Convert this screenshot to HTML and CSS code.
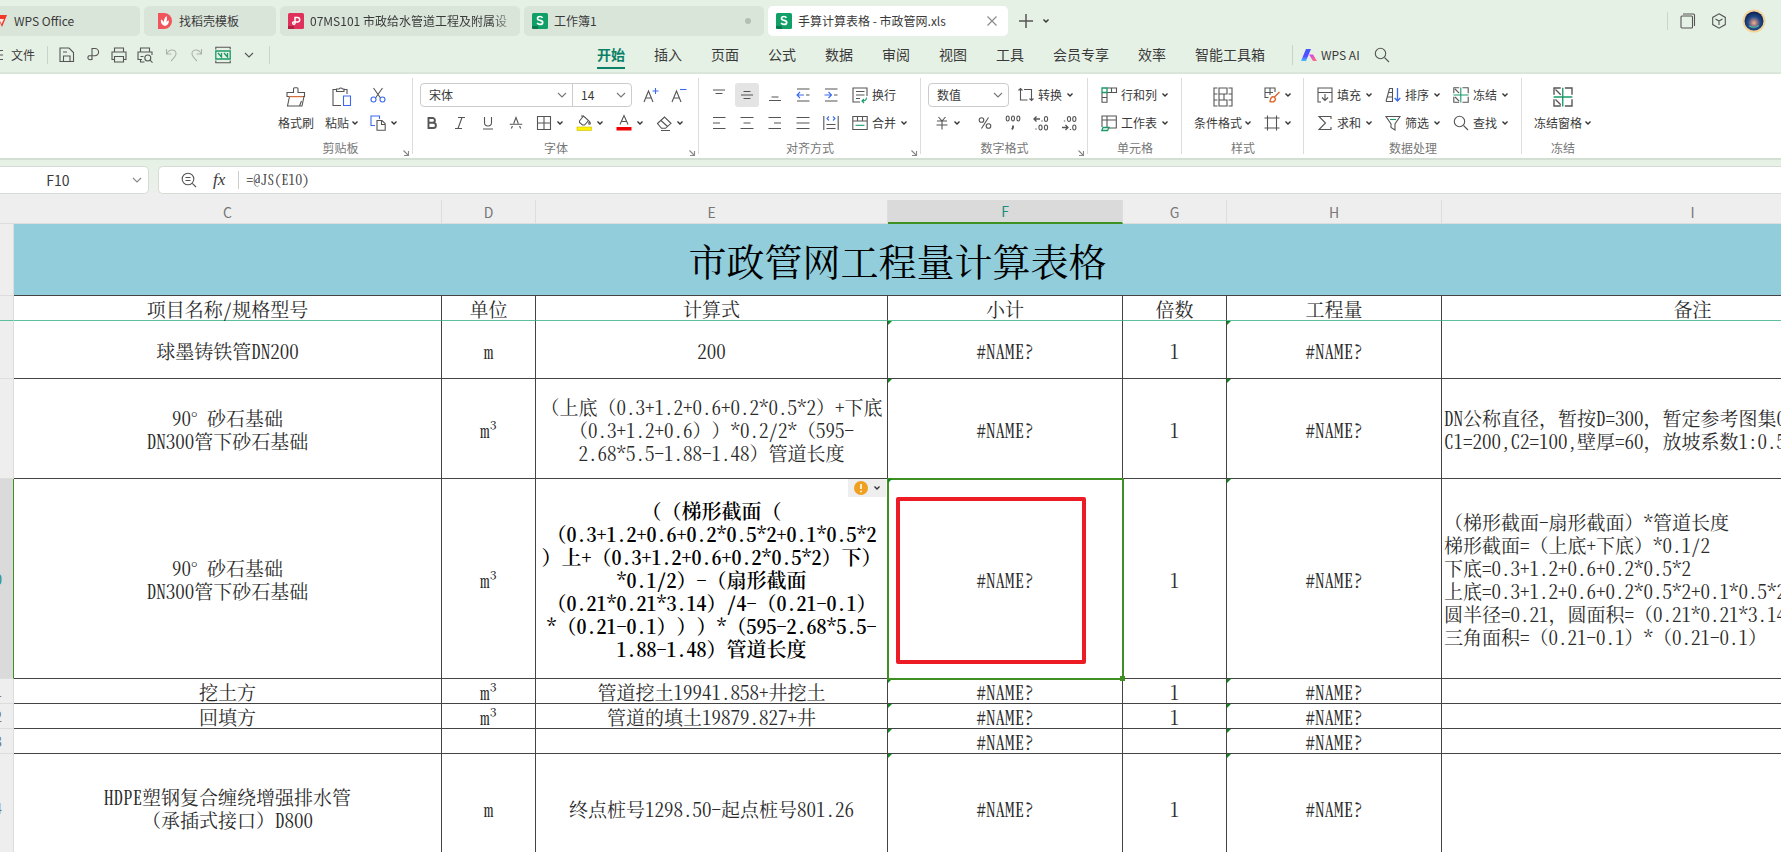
FILE: index.html
```html
<!DOCTYPE html>
<html lang="zh-CN">
<head>
<meta charset="utf-8">
<title>手算计算表格 - 市政管网.xls</title>
<link rel="stylesheet" href="styles.css">
</head>
<body>
<svg class="defs" aria-hidden="true">
  <defs>
    <linearGradient id="ai1" x1="0" y1="0" x2="0" y2="1"><stop offset="0" stop-color="#3d5afe"/><stop offset=".6" stop-color="#5b4bff"/><stop offset="1" stop-color="#3ec5ff"/></linearGradient>
    <linearGradient id="ai2" x1="0" y1="0" x2="1" y2="1"><stop offset="0" stop-color="#d63bff"/><stop offset="1" stop-color="#ff7a6b"/></linearGradient>
    <radialGradient id="av" cx=".5" cy=".6" r=".6"><stop offset="0" stop-color="#f2b58a"/><stop offset=".3" stop-color="#8d6f86"/><stop offset=".55" stop-color="#1c4a86"/><stop offset="1" stop-color="#0c1c50"/></radialGradient>
  </defs>
  <symbol id="chev" viewBox="0 0 8 8"><path d="M1.5 2.5 4 5l2.5-2.5"/></symbol>
  <symbol id="chevl" viewBox="0 0 10 10"><path d="M1 3l4 4 4-4"/></symbol>
  <symbol id="launch" viewBox="0 0 8 8"><path d="M1.500 1.500 6 6M6.500 2v4.500H2"/></symbol>
  <symbol id="sheet" viewBox="0 0 16 16"><rect width="16" height="16" rx="1.500" fill="#109f67" stroke="none"/><path d="M0 13h6v3H1.500A1.500 1.500 0 0 1 0 14.500z" fill="#0a7a4e" stroke="none"/><path d="M10.500 4.800C10 3.900 9.200 3.500 8 3.500c-1.500 0-2.500.7-2.500 1.900 0 2.800 5.200 1.200 5.200 4 0 1.200-1.100 2-2.700 2-1.300 0-2.300-.5-2.800-1.500" stroke="#fff" stroke-width="1.700"/></symbol>
  <symbol id="search" viewBox="0 0 16 16"><circle cx="6.500" cy="6.500" r="5.200"/><path d="M10.500 10.500 15 15"/></symbol>
  <symbol id="freeze" viewBox="0 0 16 16"><path d="M.8 6.200V.8h5.400M9.500 .8h5.700v5.400M.8 9.800v5.400h5.400M9.500 15.200h5.700V9.800M2 2l4.200 4.200M2 10l4.200 4.200"/><path d="M7.800 .5v15M.5 8h15" stroke="#1b9a68"/></symbol>
</svg>

<header class="tabs">
  <nav class="tablist" aria-label="文档标签">
    <button class="tab tab-home"><svg class="i16" viewBox="0 0 16 16"><path d="M0 2h15l-5 12L6 5H0" stroke="none" fill="#f0392b"/><path d="M7 6h5l-2.500 5z" fill="#ffe9e2" stroke="none"/></svg><span>WPS Office</span></button>
    <button class="tab tab-tpl"><svg class="i16" viewBox="0 0 16 16"><path d="M1 0h6a8 8 0 0 1 0 16H1z" fill="#f2545b" stroke="none"/><path d="M8 13C4.500 12 3.500 9.500 4 6.500c1.500.5 2.500 1.500 3 3C6.800 7 7.500 4.500 9.500 3c.8 2 .7 4.300-.5 6.200.8-1 1.800-1.500 3-1.700C12 10.500 10.500 12.500 8 13z" fill="#fff" stroke="none"/></svg><span>找稻壳模板</span></button>
    <button class="tab tab-doc"><svg class="i16" viewBox="0 0 16 16"><rect width="16" height="16" rx="1.500" fill="#e0305c" stroke="none"/><path d="M0 13h6v3H0z" fill="#b31e43" stroke="none"/><path d="M7 11V4.500h2.500a2.200 2.200 0 0 1 0 4.400H5.500a1.300 1.300 0 1 0 1.500 2" stroke="#fff" stroke-width="1.500"/></svg><span class="fade">07MS101 市政给水管道工程及附属设</span></button>
    <button class="tab tab-doc"><svg class="i16"><use href="#sheet"/></svg><span>工作簿1</span><i class="dot"></i></button>
    <button class="tab tab-doc active"><svg class="i16"><use href="#sheet"/></svg><span>手算计算表格 - 市政管网.xls</span><svg class="i10 close" viewBox="0 0 10 10"><path d="M.5 .5l9 9M9.500 .5l-9 9"/></svg></button>
  </nav>
  <button class="plain plus" aria-label="新建"><svg class="i14" viewBox="0 0 14 14"><path d="M7 0v14M0 7h14" stroke-width="1.500"/></svg></button>
  <button class="plain" aria-label="标签列表"><svg class="i8 dark"><use href="#chev"/></svg></button>
  <div class="corner">
    <button class="plain" aria-label="窗口"><svg class="i16" viewBox="0 0 16 16"><rect x="1" y="3" width="11.500" height="12" rx="1"/><path d="M3 1h10.500a1 1 0 0 1 1 1v11"/></svg></button>
    <button class="plain" aria-label="应用"><svg class="i16" viewBox="0 0 16 16"><path d="M8 .8 14.300 4.400v7.200L8 15.200 1.700 11.600V4.400zM4.500 6 8 8l3.500-2M8 8v4"/></svg></button>
    <button class="plain" aria-label="账号"><svg class="i24" viewBox="0 0 24 24"><circle cx="12" cy="12" r="11.500" fill="#f3d49a" stroke="none"/><circle cx="12" cy="12" r="9.500" fill="url(#av)" stroke="none"/><path d="M7 17c3 1.500 7 1.500 10-.5" stroke="#3fb9a5"/></svg></button>
  </div>
</header>

<nav class="menu" aria-label="菜单">
  <div class="quick">
    <button class="plain file"><svg class="burger" viewBox="0 0 4 12"><path d="M0 1.500h3M0 6h3M0 10.500h3"/></svg>文件</button>
    <button class="plain q" aria-label="保存"><svg class="i16" viewBox="0 0 16 16"><path d="M1 1h9l4.500 4.500v9H1zM4.500 14.500V9h6.500v5.500M4 5h4"/></svg></button>
    <button class="plain q" aria-label="输出为PDF"><svg class="i16" viewBox="0 0 16 16"><path d="M7 13V1.500h3a3.600 3.600 0 0 1 0 7.200H4a2.200 2.200 0 1 0 3 3"/></svg></button>
    <button class="plain q" aria-label="打印"><svg class="i16" viewBox="0 0 16 16"><path d="M3.500 5V1h9v4M3.500 12.500H1V5h14v7.500h-2.500M3.500 9.500h9V15h-9z"/></svg></button>
    <button class="plain q" aria-label="打印预览"><svg class="i16" viewBox="0 0 16 16"><path d="M3.500 5V1h9v4M5 12.500H1V5h14v3M3.500 12v3h4M3.500 9.500h3"/><circle cx="10.800" cy="11" r="3"/><path d="M13 13.200l2.500 2.500"/></svg></button>
    <button class="plain q dim" aria-label="撤销"><svg class="i14" viewBox="0 0 14 14"><path d="M2.500 1v5h5M2.500 6C4 3.500 5.500 2 8 2c2.500 0 4 1.500 4 3.700 0 2.300-2 4.300-5 7.300"/></svg></button>
    <button class="plain q dim" aria-label="恢复"><svg class="i14" viewBox="0 0 14 14"><path d="M11.500 1v5h-5M11.500 6C10 3.500 8.500 2 6 2 3.500 2 2 3.500 2 5.700c0 2.300 2 4.300 5 7.300"/></svg></button>
    <button class="plain q" aria-label="护眼"><svg class="i16" viewBox="0 0 16 16"><path d="M.8 2.500V.3h14.400v2.200M.8 13.500v2.200h14.400v-2.200"/><path d="M.8 4h14.400v8H.8zM3 6l3.500 4V6M9 6l3.500 4V6" stroke="#1b9a68" stroke-width="1.300"/></svg></button>
    <button class="plain q" aria-label="更多"><svg class="i10"><use href="#chevl"/></svg></button>
    <i class="vbar"></i>
  </div>
  <div class="menus">
    <button class="m on">开始</button><button class="m">插入</button><button class="m">页面</button><button class="m">公式</button><button class="m">数据</button><button class="m">审阅</button><button class="m">视图</button><button class="m">工具</button><button class="m">会员专享</button><button class="m">效率</button><button class="m">智能工具箱</button>
  </div>
  <div class="ai">
    <button class="plain wpsai"><svg class="i16" viewBox="0 0 16 16"><path d="M0 14 5 2h5L5 14z" fill="url(#ai1)" stroke="none"/><path d="M8 7.500h4l4 6.500h-4z" fill="url(#ai2)" stroke="none"/></svg><span>WPS AI</span></button>
    <button class="plain" aria-label="搜索"><svg class="i16"><use href="#search"/></svg></button>
  </div>
</nav>

<section class="ribbon" aria-label="开始">
  <div class="group g-clip">
    <div class="body cols">
      <button class="big w56"><svg class="i22" viewBox="0 0 20 20"><path d="M3.500 9.500 1.500 19H16l2-9.500M1 5.500h6.500V1.800a1 1 0 0 1 1-1H11a1 1 0 0 1 1 1v3.700h6.500v4H1zM13.500 19l2-5"/><path d="M3 9.700h14" stroke="#e8743b"/></svg><span>格式刷</span></button>
      <button class="big w36"><svg class="i22" viewBox="0 0 20 20"><path d="M9 18.500H1V2.500h3M12.500 2.500H15V7M4.500 4.500V2H7a2 2 0 0 1 3.500 0H12v2.500z"/><path d="M11.500 9h7v9.500h-7z" stroke="#3b6af0"/></svg><span>粘贴<svg class="i8 dark"><use href="#chev"/></svg></span></button>
      <div class="rows pad10">
        <button class="b" aria-label="剪切"><svg class="i16" viewBox="0 0 16 16"><path d="M3.500 1l7 10M12.500 1l-7 10"/><circle cx="3.500" cy="12.500" r="2.500" stroke="#3b6af0"/><circle cx="12.500" cy="12.500" r="2.500" stroke="#3b6af0"/></svg></button>
        <button class="b" aria-label="复制"><svg class="i16" viewBox="0 0 16 16"><path d="M5 10.500H1V1h8.500v3" stroke="#3b6af0"/><path d="M7 5.500h5l3.200 3.200v6.500H7zM11.500 5.500v4h4"/></svg><svg class="i8 dark"><use href="#chev"/></svg></button>
      </div>
    </div>
    <div class="cap">剪贴板<svg class="i8 corner-i"><use href="#launch"/></svg></div>
  </div>

  <div class="group g-font">
    <div class="body rows">
      <div class="row in2">
        <div class="combo">
          <label class="pick p-font"><select aria-label="字体"><option>宋体</option></select><svg class="i10"><use href="#chevl"/></svg></label>
          <label class="pick p-size"><select aria-label="字号"><option>14</option></select><svg class="i10"><use href="#chevl"/></svg></label>
        </div>
        <button class="s gap5" aria-label="增大字号"><svg class="i16" viewBox="0 0 16 16"><path d="M1 15 5.500 4 10 15M2.700 11h5.600"/><path d="M12.500 1v6M9.500 4h6" stroke="#3b6af0"/></svg></button>
        <button class="s" aria-label="减小字号"><svg class="i16" viewBox="0 0 16 16"><path d="M1 15 5.500 4 10 15M2.700 11h5.600"/><path d="M9 2.500h6.500" stroke="#3b6af0"/></svg></button>
      </div>
      <div class="row">
        <button class="s" aria-label="加粗"><svg class="i14" viewBox="0 0 14 14"><path d="M3.500 2h4a2.400 2.400 0 0 1 0 4.800h-4zM3.500 6.800h4.800a2.600 2.600 0 0 1 0 5.200H3.500z" stroke-width="1.900"/></svg></button>
        <button class="s" aria-label="倾斜"><svg class="i14" viewBox="0 0 14 14"><path d="M5 1.500h7M2 12.500h7M9 1.500l-4 11"/></svg></button>
        <button class="s" aria-label="下划线"><svg class="i14" viewBox="0 0 14 14"><path d="M3.500 1v5.500a3.500 3.500 0 0 0 7 0V1M2 13h10"/></svg></button>
        <button class="s" aria-label="删除线"><svg class="i14" viewBox="0 0 14 14"><path d="M4.700 7.500 7 1.500l2.300 6M3.400 10l-1 2.500M10.600 10l1 2.500M.8 8.300h12.400"/></svg></button>
        <button class="sd" aria-label="边框"><svg class="i16" viewBox="0 0 16 16"><path d="M1.500 1.500h13v13h-13zM8 1.500v13M1.500 8h13"/></svg><svg class="i8 dark"><use href="#chev"/></svg></button>
        <button class="sd" aria-label="填充颜色"><svg class="i16" viewBox="0 0 16 16"><path d="M3.500 6 7.500 1l5 4.500-4 4.500h-2L3.500 7.500zM5 1h3M13.500 6.500c1.200 1.700 1 2.800 0 2.800s-1.200-1.100 0-2.800z"/><rect x="1" y="12" width="14.500" height="3.500" fill="#fff200" stroke="#c9b800" stroke-width=".6"/></svg><svg class="i8 dark"><use href="#chev"/></svg></button>
        <button class="sd" aria-label="字体颜色"><svg class="i16" viewBox="0 0 16 16"><path d="M4 9.500 8 .5 12 9.500M5.400 6.500h5.200"/><rect x=".5" y="12" width="15" height="3.500" fill="#f00000" stroke="none"/></svg><svg class="i8 dark"><use href="#chev"/></svg></button>
        <button class="sd" aria-label="清除"><svg class="i16" viewBox="0 0 16 16"><path d="M1.500 8.500 8.500 2 15 8.300l-5.500 5H5.500zM5 5.500l6.500 6M5 15.500h9"/></svg><svg class="i8 dark"><use href="#chev"/></svg></button>
      </div>
    </div>
    <div class="cap">字体<svg class="i8 corner-i"><use href="#launch"/></svg></div>
  </div>

  <div class="group g-align">
    <div class="body rows">
      <div class="row">
        <button class="s" aria-label="顶端对齐"><svg class="i14" viewBox="0 0 14 14"><path d="M1 2h12M3.500 5.500h7"/></svg></button>
        <button class="s pressed" aria-label="垂直居中"><svg class="i14" viewBox="0 0 14 14"><path d="M3.500 3.500h7M1 7h12M3.500 10.500h7"/></svg></button>
        <button class="s" aria-label="底端对齐"><svg class="i14" viewBox="0 0 14 14"><path d="M3.500 9h7M1 12.500h12"/></svg></button>
        <button class="s" aria-label="减少缩进"><svg class="i14" viewBox="0 0 14 14"><path d="M1 1h12.500M1 13h12.500M10 7h3.500"/><path d="M8 7H1M4 4 1 7l3 3" stroke="#3b6af0"/></svg></button>
        <button class="s" aria-label="增加缩进"><svg class="i14" viewBox="0 0 14 14"><path d="M1 1h12.500M1 13h12.500M10 7h3.500"/><path d="M.5 7h7M4.500 4l3 3-3 3" stroke="#3b6af0"/></svg></button>
        <button class="b pl7"><svg class="i16" viewBox="0 0 16 16"><path d="M8 15H1V1h14v8M4 4.500h8.500M4 8h8.500M4 11.500h4"/><path d="M14.500 10.500c0 2.500-1 3.500-4 3.500M12 12l-2 2 2 2" stroke="#1b9a68"/></svg>换行</button>
      </div>
      <div class="row">
        <button class="s" aria-label="左对齐"><svg class="i14" viewBox="0 0 14 14"><path d="M1 1.500h12.500M1 7h7M1 12.500h12.500"/></svg></button>
        <button class="s" aria-label="水平居中"><svg class="i14" viewBox="0 0 14 14"><path d="M.5 1.500h13M3.500 7h7M.5 12.500h13"/></svg></button>
        <button class="s" aria-label="右对齐"><svg class="i14" viewBox="0 0 14 14"><path d="M.5 1.500H13M6 7h7M.5 12.500H13"/></svg></button>
        <button class="s" aria-label="两端对齐"><svg class="i14" viewBox="0 0 14 14"><path d="M.5 1.500h13M.5 7h13M.5 12.500h13"/></svg></button>
        <button class="s" aria-label="分散对齐"><svg class="i16" viewBox="0 0 16 16"><path d="M.8 1v14M15.200 1v14M3.500 9.500h9M3.500 13.500h9"/><path d="M6 1.500 4 3.500l2 2M10 1.500l2 2-2 2" stroke="#3b6af0"/></svg></button>
        <button class="b pl7"><svg class="i16" viewBox="0 0 16 16"><path d="M.8 1.500h14.400v13H.8zM.8 6h14.400M5.500 1.500V6M10.500 1.500V6"/><path d="M3.500 10.300h9" stroke="#1b9a68"/></svg>合并<svg class="i8 dark"><use href="#chev"/></svg></button>
      </div>
    </div>
    <div class="cap">对齐方式<svg class="i8 corner-i"><use href="#launch"/></svg></div>
  </div>

  <div class="group g-num">
    <div class="body rows">
      <div class="row">
        <div class="combo"><label class="pick p-num"><select aria-label="数字格式"><option>数值</option></select><svg class="i10"><use href="#chevl"/></svg></label></div>
        <button class="b pl9"><svg class="i16" viewBox="0 0 16 16"><path d="M2.500 1.500v11.500h7M.5 3.500l2-2 2 2M6 2.500h7.500v11M11.500 11.500l2 2 2-2"/></svg>转换<svg class="i8 dark"><use href="#chev"/></svg></button>
      </div>
      <div class="row">
        <button class="sd" aria-label="货币"><svg class="i14" viewBox="0 0 14 14"><path d="M3.500 1 7 5l3.500-4M2 5h10M1.500 9h11M7 5v8.500"/></svg><svg class="i8 dark"><use href="#chev"/></svg></button>
        <button class="s gap3" aria-label="百分比"><svg class="i14" viewBox="0 0 14 14"><circle cx="3.500" cy="4" r="2.300"/><circle cx="10.500" cy="10" r="2.300"/><path d="M10.500 1.500 3.500 12.500"/></svg></button>
        <button class="s" aria-label="千位分隔"><svg class="i16" viewBox="0 0 16 16"><ellipse cx="2.700" cy="3.500" rx="1.500" ry="2.500"/><ellipse cx="8" cy="3.500" rx="1.500" ry="2.500"/><ellipse cx="13.300" cy="3.500" rx="1.500" ry="2.500"/><path d="M8 10.500v2L7 14.500" stroke-width="1.800"/></svg></button>
        <button class="s" aria-label="增加小数位"><svg class="i16" viewBox="0 0 16 16"><path d="M7 4H1M3.500 1.500 1 4l2.500 2.500M9 5.500v1M3 13.500v1" stroke-width="1.300"/><ellipse cx="13" cy="4" rx="1.600" ry="2.500"/><ellipse cx="7.500" cy="12.500" rx="1.600" ry="2.500"/><ellipse cx="13" cy="12.500" rx="1.600" ry="2.500"/></svg></button>
        <button class="s" aria-label="减少小数位"><svg class="i16" viewBox="0 0 16 16"><path d="M1 12.500h6M4.500 10 7 12.500 4.500 15M9.500 14v1M3.500 5.500v1" stroke-width="1.300"/><ellipse cx="8" cy="4" rx="1.600" ry="2.500"/><ellipse cx="13.300" cy="4" rx="1.600" ry="2.500"/><ellipse cx="13.300" cy="12.500" rx="1.600" ry="2.500"/></svg></button>
      </div>
    </div>
    <div class="cap">数字格式<svg class="i8 corner-i"><use href="#launch"/></svg></div>
  </div>

  <div class="group g-cell">
    <div class="body rows">
      <button class="b"><svg class="i16" viewBox="0 0 16 16"><path d="M6 1h9.500v4.500H6M10.500 1v4.500M1 6v9.300h5V6M1 10.500h5"/><path d="M1 1h5v4.500H1z" stroke="#1b9a68" stroke-width="1.300"/></svg>行和列<svg class="i8 dark"><use href="#chev"/></svg></button>
      <button class="b"><svg class="i16" viewBox="0 0 16 16"><path d="M1 12V1h14.300v12H8M1 5h14.300M6 1v11"/><path d="M2 12.500h6l-1.500 3H.8z" stroke="#1b9a68" stroke-width="1.300"/></svg>工作表<svg class="i8 dark"><use href="#chev"/></svg></button>
    </div>
    <div class="cap">单元格</div>
  </div>

  <div class="group g-style">
    <div class="body cols">
      <button class="big"><svg class="i22" viewBox="0 0 20 20"><path d="M4.500 1H1v18h3.500M15.500 1H19v18h-3.500M1 7h3.500M1 13h3.500M15.500 7H19M15.500 13H19M6 1h8v6H6zM6 13h8v6H6zM6 7v6h5V7z"/></svg><span>条件格式<svg class="i8 dark"><use href="#chev"/></svg></span></button>
      <div class="rows pad12">
        <button class="b" aria-label="表格样式"><svg class="i16" viewBox="0 0 16 16"><path d="M4.500 10.500H1V1h10v4M1 5.500h8M6 1v7"/><path d="M15.500 5 10 10.500M10 10c-2-.8-3.500.5-4 4.500 3 1 5.500 0 5.500-3z" stroke="#e0672e" stroke-width="1.400"/></svg><svg class="i8 dark"><use href="#chev"/></svg></button>
        <button class="b" aria-label="单元格样式"><svg class="i16" viewBox="0 0 16 16"><path d="M3.500 .5v15M12.500 .5v15M.5 3h15M.5 13h15"/></svg><svg class="i8 dark"><use href="#chev"/></svg></button>
      </div>
    </div>
    <div class="cap">样式</div>
  </div>

  <div class="group g-data">
    <div class="body trio">
      <button class="b"><svg class="i16" viewBox="0 0 16 16"><path d="M4 15H1V5.500M12 15h3V5.500M1 1h14v4.500H1zM8 7v6M5 10.500l3 3 3-3"/></svg>填充<svg class="i8 dark"><use href="#chev"/></svg></button>
      <button class="b"><svg class="i16" viewBox="0 0 16 16"><path d="M1 14.500 4.500 1.500h3v13H1M2 10h5.500M3.500 5.500h4"/><path d="M12.500 1v12.500M9.700 11l2.800 3 2.800-3" stroke="#3b6af0" stroke-width="1.300"/></svg>排序<svg class="i8 dark"><use href="#chev"/></svg></button>
      <button class="b"><svg class="i16"><use href="#freeze"/></svg>冻结<svg class="i8 dark"><use href="#chev"/></svg></button>
      <button class="b"><svg class="i16" viewBox="0 0 16 16"><path d="M14 4V1.500H2L8.500 8 2 14.500h12V12"/></svg>求和<svg class="i8 dark"><use href="#chev"/></svg></button>
      <button class="b"><svg class="i16" viewBox="0 0 16 16"><path d="M1 1.500h14L10 9v6l-4-2.500V9z"/><path d="M5 4.500h6" stroke="#1b9a68"/></svg>筛选<svg class="i8 dark"><use href="#chev"/></svg></button>
      <button class="b"><svg class="i16"><use href="#search"/></svg>查找<svg class="i8 dark"><use href="#chev"/></svg></button>
    </div>
    <div class="cap">数据处理</div>
  </div>

  <div class="group g-freeze">
    <div class="body cols mid">
      <button class="big"><svg class="i22"><use href="#freeze"/></svg><span>冻结窗格<svg class="i8 dark"><use href="#chev"/></svg></span></button>
    </div>
    <div class="cap">冻结</div>
  </div>
</section>

<section class="fbar" aria-label="编辑栏">
  <label class="namebox"><input aria-label="名称框" value="F10"><svg class="i10"><use href="#chevl"/></svg></label>
  <div class="formula">
    <svg class="i16" viewBox="0 0 16 16"><circle cx="7" cy="7" r="5.800"/><path d="M11.300 11.300 15 15M4.500 5.500h5M4.500 8.500h5"/></svg>
    <em class="fx">fx</em>
    <input class="ftext" aria-label="公式" value="=@JS(E10)">
  </div>
</section>

<main class="sheet">
  <table>
    <colgroup><col class="c0"><col class="cC"><col class="cD"><col class="cE"><col class="cF"><col class="cG"><col class="cH"><col class="cI"></colgroup>
    <thead>
      <tr class="heads"><th></th><th>C</th><th>D</th><th>E</th><th class="sel">F</th><th>G</th><th>H</th><th>I</th></tr>
    </thead>
    <tbody>
      <tr class="title"><th></th><td colspan="7">市政管网工程量计算表格</td></tr>
      <tr class="r25 frozen"><th></th><td>项目名称/规格型号</td><td>单位</td><td>计算式</td><td>小计</td><td>倍数</td><td>工程量</td><td>备注</td></tr>
      <tr class="r58"><th></th><td>球墨铸铁管DN200</td><td>m</td><td>200</td><td class="err">#NAME?</td><td>1</td><td class="err">#NAME?</td><td></td></tr>
      <tr class="r100"><th></th><td>90°&nbsp;砂石基础<br>DN300管下砂石基础</td><td>m³</td><td><span class="w">（上底（</span>0.3+1.2+0.6+0.2*0.5*2<span class="w">）</span>+下底<br><span class="w">（</span>0.3+1.2+0.6<span class="w">））</span>*0.2/2*<span class="w">（</span>595-<br>2.68*5.5-1.88-1.48<span class="w">）管道长度</span></td><td class="err">#NAME?</td><td>1</td><td class="err">#NAME?</td><td class="note">DN<span class="w">公称直径，暂按</span>D=300<span class="w">，暂定参考图集</span>06MS201<br>C1=200,C2=100,壁厚=60<span class="w">，放坡系数</span>1:0.5</td></tr>
      <tr class="r200"><th class="sel"><span>10</span></th><td>90°&nbsp;砂石基础<br>DN300管下砂石基础</td><td>m³</td><td class="bold"><span class="w">（（梯形截面（</span><br><span class="w">（</span>0.3+1.2+0.6+0.2*0.5*2+0.1*0.5*2<br><span class="w">）上</span>+<span class="w">（</span>0.3+1.2+0.6+0.2*0.5*2<span class="w">）下）</span><br>*0.1/2<span class="w">）</span>-<span class="w">（扇形截面</span><br><span class="w">（</span>0.21*0.21*3.14<span class="w">）</span>/4-<span class="w">（</span>0.21-0.1<span class="w">）</span><br>*<span class="w">（</span>0.21-0.1<span class="w">）））</span>*<span class="w">（</span>595-2.68*5.5-<br>1.88-1.48<span class="w">）管道长度</span><button class="warn" aria-label="错误提示"><svg class="i14" viewBox="0 0 14 14"><circle cx="7" cy="7" r="7" fill="#f0a020" stroke="none"/><path d="M7 3v5M7 9.700v1.500" stroke="#fff" stroke-width="1.600"/></svg><svg class="i8 dark"><use href="#chev"/></svg></button></td><td class="err cursor">#NAME?<i class="mark"></i><i class="grip"></i></td><td>1</td><td class="err">#NAME?</td><td class="note"><span class="w">（梯形截面</span>-<span class="w">扇形截面）</span>*管道长度<br>梯形截面=<span class="w">（上底</span>+<span class="w">下底）</span>*0.1/2<br>下底=0.3+1.2+0.6+0.2*0.5*2<br>上底=0.3+1.2+0.6+0.2*0.5*2+0.1*0.5*2<br>圆半径=0.21<span class="w">，圆面积</span>=<span class="w">（</span>0.21*0.21*3.14<span class="w">）</span><br>三角面积=<span class="w">（</span>0.21-0.1<span class="w">）</span>*<span class="w">（</span>0.21-0.1<span class="w">）</span></td></tr>
      <tr class="r25"><th><span>11</span></th><td>挖土方</td><td>m³</td><td>管道挖土19941.858+井挖土</td><td class="err">#NAME?</td><td>1</td><td class="err">#NAME?</td><td></td></tr>
      <tr class="r25"><th><span>12</span></th><td>回填方</td><td>m³</td><td>管道的填土19879.827+井</td><td class="err">#NAME?</td><td>1</td><td class="err">#NAME?</td><td></td></tr>
      <tr class="r25"><th><span>13</span></th><td></td><td></td><td></td><td class="err">#NAME?</td><td></td><td class="err">#NAME?</td><td></td></tr>
      <tr class="r108"><th><span>14</span></th><td>HDPE塑钢复合缠绕增强排水管<br><span class="w">（承插式接口）</span>D800</td><td>m</td><td>终点桩号1298.50-起点桩号801.26</td><td class="err">#NAME?</td><td>1</td><td class="err">#NAME?</td><td></td></tr>
    </tbody>
  </table>
</main>
</body>
</html>
```
FILE: styles.css
```css
* { box-sizing: border-box; }
html, body { height: 100%; }
body {
  margin: 0;
  display: flex;
  flex-direction: column;
  overflow: hidden;
  background: #e6f1e5;
  color: #3a3a3a;
  font: 12px/16px "Noto Sans CJK SC", sans-serif;
}
button, input, select { font: inherit; color: inherit; }
button { border: 0; background: none; padding: 0; margin: 0; }
svg { flex: none; display: block; fill: none; stroke: #555; stroke-width: 1.1; overflow: visible; }
.defs { position: absolute; width: 0; height: 0; }
.i8 { width: 8px; height: 8px; }
.i10 { width: 10px; height: 10px; }
.i14 { width: 14px; height: 14px; }
.i16 { width: 16px; height: 16px; }
.i22 { width: 20px; height: 20px; }
.i24 { width: 24px; height: 24px; }
.dark { stroke: #333; stroke-width: 1.4; }
.plain { display: flex; align-items: center; justify-content: center; }

/* document tabs */
.tabs { display: flex; align-items: center; height: 38px; padding-top: 4px; flex: none; }
.tablist { display: flex; gap: 4px; }
.tab { display: flex; align-items: center; gap: 6px; height: 30px; padding: 0 8px; border-radius: 5px; background: #dae5da; white-space: nowrap; }
.tab-home { width: 148px; margin-left: -8px; padding-left: 0; }
.tab-tpl { width: 132px; padding-left: 13px; }
.tab-doc { width: 240px; }
.tab.active { background: #fff; }
.fade { overflow: hidden; flex: 1; text-align: left; -webkit-mask-image: linear-gradient(90deg, #000 90%, rgba(0,0,0,.3)); mask-image: linear-gradient(90deg, #000 90%, rgba(0,0,0,.3)); }
.dot { width: 6px; height: 6px; border-radius: 50%; background: #b4bfb4; margin: 0 5px 0 auto; }
.close { margin: 0 3px 0 auto; stroke: #888; }
.plus { margin: 0 5px 0 11px; width: 14px; }
.plus + .plain { width: 16px; }
.corner { display: flex; align-items: center; gap: 15px; margin-left: auto; padding: 0 15px 0 12px; border-left: 1px solid #cbd6cb; height: 18px; }

/* menu row */
.menu { display: flex; align-items: center; height: 36px; border-bottom: 2px solid #dae6da; flex: none; }
.quick { display: flex; align-items: center; width: 597px; }
.file { width: 48px; height: 18px; gap: 7px; border-right: 1px solid #c8d3c8; justify-content: flex-start; }
.burger { height: 12px; width: 4px; }
.q { width: 26px; }
.file + .q { margin-left: 6px; }
.dim { opacity: .4; }
.vbar { width: 1px; height: 18px; margin-left: 7px; background: #cbd6cb; }
.menus { display: flex; gap: 29px; font-size: 14px; }
.m { height: 28px; line-height: 24px; border-bottom: 2px solid transparent; white-space: nowrap; }
.m.on { color: #0b8068; font-weight: 700; border-color: #0b8068; }
.ai { display: flex; align-items: center; gap: 14px; margin-left: 27px; padding-left: 8px; height: 20px; border-left: 1px solid #c8d3c8; }
.wpsai { gap: 4px; }

/* ribbon */
.ribbon { display: flex; height: 86px; padding-left: 268px; background: #fff; border-bottom: 2px solid #d3dfd2; flex: none; }
.group { display: flex; flex-direction: column; flex: none; padding-top: 9px; position: relative; white-space: nowrap; }
.group::after { content: ""; position: absolute; right: 0; top: 4px; bottom: 4px; width: 1px; background: #ddd; }
.g-freeze::after { display: none; }
.g-clip { width: 145px; }
.g-font { width: 286px; }
.g-align { width: 222px; }
.g-num { width: 167px; }
.g-cell { width: 94px; }
.g-style { width: 122px; }
.g-data { width: 218px; }
.g-freeze { width: 82px; }
.g-font .body { padding-left: 5px; }
.g-align .body { padding-left: 6px; }
.g-num .body { padding-left: 7px; }
.g-cell .body { padding-left: 13px; }
.g-style .body { padding-left: 12px; }
.g-data .body { padding-left: 13px; }
.body { height: 52px; }
.cols { display: flex; }
.mid { justify-content: center; }
.rows { display: flex; flex-direction: column; gap: 4px; }
.row { display: flex; align-items: center; height: 24px; }
.in2 { padding-left: 2px; }
.trio { display: grid; grid-template-columns: repeat(3, 55px); gap: 4px 13px; justify-content: start; }
.b { display: flex; align-items: center; gap: 4px; height: 24px; }
.b .dark, .big .dark { margin-left: -1px; }
.b svg:first-child + .dark { margin-left: 0; }
.s { display: flex; align-items: center; justify-content: center; width: 28px; height: 24px; }
.sd { display: flex; align-items: center; justify-content: center; gap: 4px; width: 40px; height: 24px; }
.pressed { width: 24px; margin: 0 2px; background: #e4e4e4; border-radius: 3px; }
.gap5 { margin-left: 5px; }
.gap3 { margin-left: 3px; }
.pl7 { padding-left: 7px; }
.pl9 { padding-left: 9px; }
.pad10 { padding-left: 10px; }
.pad12 { padding-left: 12px; }
.big { display: flex; flex-direction: column; align-items: center; justify-content: space-between; padding: 4px 0 4px; height: 52px; }
.big span { display: flex; align-items: center; gap: 3px; }
.w56 { width: 56px; }
.w36 { width: 36px; }
.cap { margin-top: 4px; color: #777; text-align: center; line-height: 18px; }
.corner-i { position: absolute; right: 3px; bottom: 1px; stroke: #888; }
.combo { display: flex; height: 24px; border: 1px solid #ccc; border-radius: 4px; }
.pick { display: grid; align-items: center; }
.pick > * { grid-area: 1 / 1; }
.pick select { appearance: none; border: 0; background: none; padding: 0 0 0 8px; width: 100%; outline: 0; }
.pick svg { justify-self: end; margin-right: 5px; stroke: #777; }
.p-font { width: 151px; }
.p-size { width: 59px; border-left: 1px solid #ccc; }
.p-num { width: 79px; }

/* formula bar */
.fbar { display: flex; gap: 9px; height: 40px; padding-top: 6px; background: linear-gradient(#e6f1e5 0, #e9f0e8 50%, #eee 90%); flex: none; }
.namebox, .formula { height: 28px; background: #fff; border: 1px solid #d5dcd5; }
.namebox { display: flex; align-items: center; width: 149px; border-left: 0; border-radius: 0 5px 5px 0; padding-right: 6px; }
.namebox input { width: 133px; min-width: 0; border: 0; background: none; padding: 0 16px 0 0; text-align: center; font-size: 14px; outline: 0; }
.namebox svg { stroke: #888; }
.formula { display: flex; align-items: center; flex: 1; border-right: 0; border-radius: 5px 0 0 5px; padding-left: 22px; }
.fx { margin-left: 16px; font: italic 17px/20px "Liberation Serif", serif; }
.ftext { flex: 1; margin-left: 13px; padding: 0 0 2px 7px; height: 18px; border: 0; border-left: 1px solid #ccc; outline: 0; font: 14px/16px "Noto Serif CJK SC", "Noto Sans Mono CJK SC", monospace; font-feature-settings: "hwid"; }

/* grid: half-width Latin forms, full-width CJK punctuation */
.sheet { flex: 1; min-height: 0; overflow: hidden; background: #fff; }
table { table-layout: fixed; width: 1944px; border-collapse: separate; border-spacing: 0; }
.c0 { width: 14px; } .cC { width: 428px; } .cD { width: 94px; } .cE { width: 352px; }
.cF { width: 235px; } .cG { width: 104px; } .cH { width: 215px; } .cI { width: 502px; }
th { padding: 0; background: #eee; border-right: 1px solid #ddd; border-bottom: 1px solid #ddd; font: 14px/20px "Noto Sans CJK SC", sans-serif; color: #777; }
th span { display: flex; justify-content: flex-end; width: 2px; }
.heads { height: 24px; }
.heads th:first-child { border-right: 0; }
th.sel { background: #dadada; color: #18907c; }
.heads .sel { border-bottom: 2px solid #3f9022; }
tbody .sel { border-right-color: #3f9022; }
td {
  position: relative;
  padding: 1px 0 0;
  border-right: 1px solid #444;
  border-bottom: 1px solid #444;
  color: #2b2b2b;
  text-align: center;
  white-space: nowrap;
  font: 19px/23px "Noto Serif CJK SC", "Noto Sans Mono CJK SC", "Noto Sans CJK SC", monospace;
  font-feature-settings: "hwid";
  text-spacing-trim: space-all;
}
.w { font-feature-settings: normal; }
.title { height: 72px; }
.title td { padding-right: 162px; background: #92cddc; color: #000; font-size: 38px; line-height: 44px; }
.r25 { height: 25px; } .r58 { height: 58px; } .r100 { height: 100px; } .r200 { height: 200px; } .r108 { height: 108px; }
.frozen th, .frozen td { border-bottom-color: #5cc09c; }
td.note { padding-left: 2px; text-align: left; }
.bold { font-size: 20px; font-weight: 600; color: #000; }
.err::before { content: ""; position: absolute; left: 0; top: 0; border: 2px solid; border-color: #0a8a1a transparent transparent #0a8a1a; }
.cursor { outline: 2px solid #3f9022; outline-offset: -1px; z-index: 1; }
.mark { position: absolute; left: 8px; top: 18px; width: 190px; height: 167px; border: 4px solid #ed1c24; border-radius: 2px; }
.grip { position: absolute; right: -3px; bottom: -3px; width: 5px; height: 5px; background: #3f9022; }
.warn { position: absolute; right: 1px; top: 0; display: flex; align-items: center; justify-content: center; gap: 5px; width: 38px; height: 18px; background: #eee; }
```
